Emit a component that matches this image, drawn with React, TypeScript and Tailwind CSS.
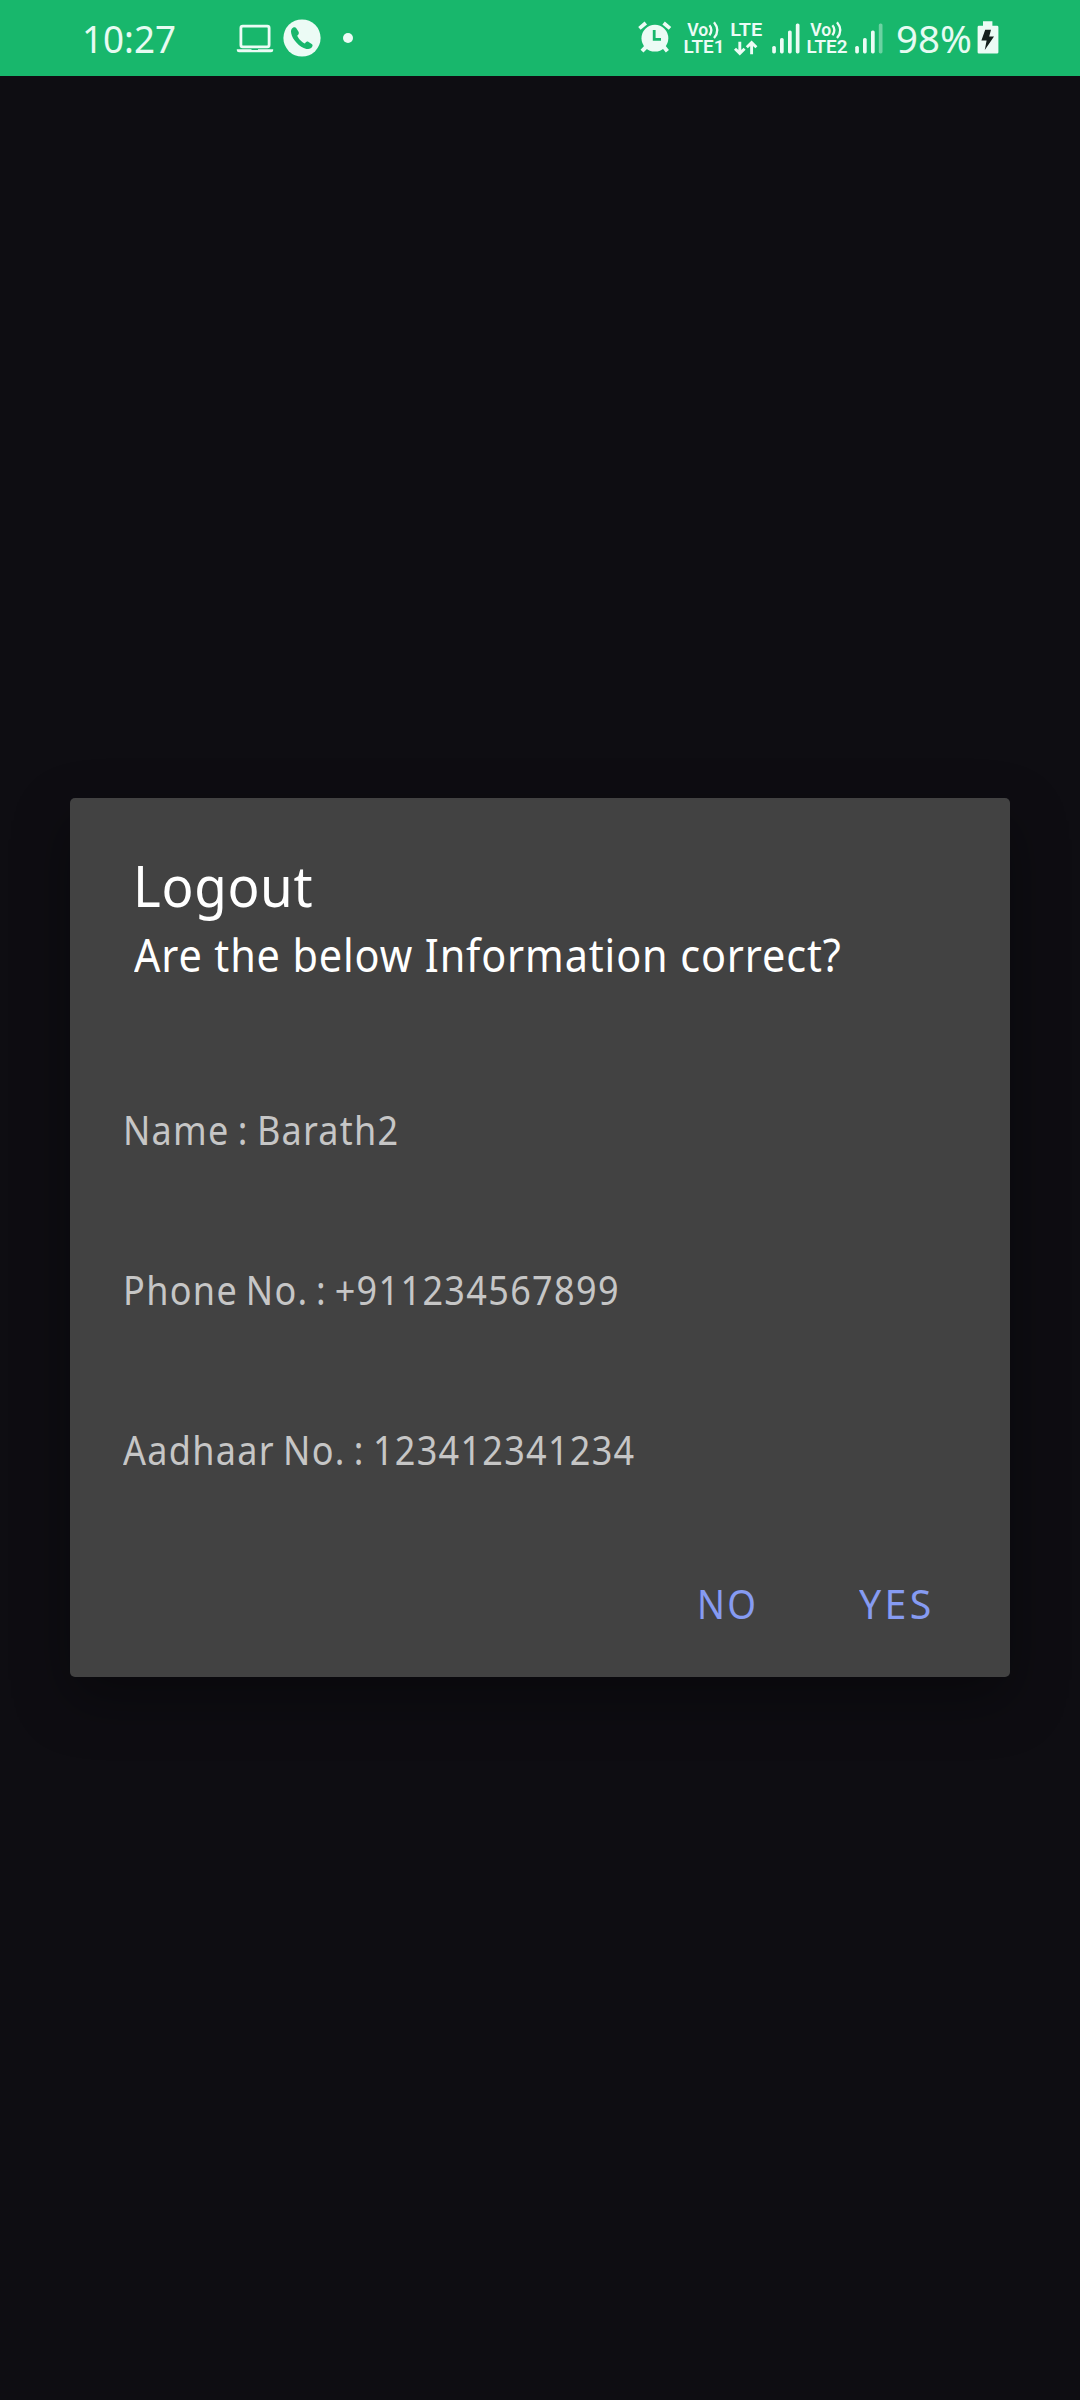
import React from 'react';

const INK = '#ecfbf5';

function LaptopIcon() {
  return (
    <svg className="h-[30px] w-[38px]" viewBox="0 0 38 30" fill="none">
      <rect x="4.9" y="2.2" width="28.2" height="20.6" rx="1.8" stroke={INK} strokeWidth="2.8" />
      <path d="M0.8 25.3H15.5V26H22V25.3H37.2V26.2Q37.2 28.3 35 28.3H3Q0.8 28.3 0.8 26.2Z" fill={INK} />
    </svg>
  );
}

function PhoneIcon() {
  return (
    <svg className="h-[38px] w-[38px]" viewBox="0 0 38 38">
      <circle cx="19" cy="19" r="18.6" fill={INK} />
      <path
        d="M10.2 8.6C8.3 9.8 7.6 11.6 8.2 14.2C9.4 20.6 16.4 28.2 23.4 29.9C26.4 30.5 28.4 29.5 29.4 27.3C29.8 26.3 29.6 25.6 28.7 25L25.6 22.9C24.5 22.2 23.6 22.4 22.8 23.3L21.9 24.4C19 23.4 15.4 19.6 14.2 16.7L15.4 15.4C16 14.6 16 13.7 15.4 12.6L13.3 9.2C12.5 8 11.4 7.9 10.2 8.6Z"
        fill="#18b76c"
      />
    </svg>
  );
}

function AlarmIcon() {
  return (
    <svg className="h-[32px] w-[34px]" viewBox="0 0 34 32" fill="none">
      <path d="M1.4 7.4L7.8 2M25.6 2L32 7.4" stroke={INK} strokeWidth="3.8" />
      <path d="M8 26L4 30.2M26 26L29.4 30.2" stroke={INK} strokeWidth="4" />
      <circle cx="16.9" cy="17.2" r="13.4" fill={INK} />
      <path d="M16.2 9V18.4H23" stroke="#18b76c" strokeWidth="2.8" />
    </svg>
  );
}

function VolteBadge({ sim }: { sim: string }) {
  return (
    <svg className="h-[34px] w-[40px] overflow-visible" viewBox="0 0 40 34" fill="none">
      <g fill={INK} fontFamily="Roboto" fontWeight="600">
        <text x="3.2" y="14.6" fontSize="18" textLength="21" lengthAdjust="spacingAndGlyphs">Vo</text>
        <text x="-0.6" y="32.2" fontSize="18" textLength="41" lengthAdjust="spacingAndGlyphs">{'LTE' + sim}</text>
      </g>
      <path d="M25.4 4.2Q29.4 9 25.4 14.2M30 1.2Q36.6 9.3 30 17" stroke={INK} strokeWidth="2.3" />
    </svg>
  );
}

function LteData() {
  return (
    <svg className="h-[36px] w-[31px] overflow-visible" viewBox="0 0 31 36" fill="none">
      <text x="-0.8" y="15.4" fontSize="19" fontFamily="Roboto" fontWeight="600" fill={INK} textLength="32" lengthAdjust="spacingAndGlyphs">
        LTE
      </text>
      <path d="M8.8 20.8V32M4 27.8L8.8 32.4L13.6 27.8M20.6 33.2V22M15.8 26.2L20.6 21.6L25.4 26.2" stroke={INK} strokeWidth="2.9" />
    </svg>
  );
}

function Signal({ weak = false }: { weak?: boolean }) {
  return (
    <svg className="h-[32px] w-[28px]" viewBox="0 0 28 32" fill={INK}>
      <rect x="0.2" y="24" width="3.7" height="7.4" rx="1.6" />
      <rect x="8" y="16" width="3.7" height="15.4" rx="1.6" />
      <rect x="16" y="8.4" width="3.7" height="23" rx="1.6" />
      <rect x="23.8" y="1.4" width="3.7" height="30" rx="1.6" opacity={weak ? 0.4 : 1} />
    </svg>
  );
}

function Battery() {
  return (
    <svg className="h-[33px] w-[22px]" viewBox="0 0 22 33">
      <path d="M6 0.2H15.4V4.8H20Q21.4 4.8 21.4 6.2V31.2Q21.4 32.6 20 32.6H2Q0.6 32.6 0.6 31.2V6.2Q0.6 4.8 2 4.8H6Z" fill={INK} />
      <path d="M8.2 8.8H14L12.2 15.6H17L7.8 29L9.6 19.6H4.4Z" fill="#14201c" />
    </svg>
  );
}

function StatusBar() {
  return (
    <header className="flex h-[76px] items-start bg-[#18b76c] text-[39px] leading-[60px] text-[#e6fbf2]">
      <span className="mt-[8px] ml-[82px] w-[100px] origin-left scale-x-[0.943] whitespace-nowrap">10:27</span>
      <div className="mt-[24px] ml-[54px]"><LaptopIcon /></div>
      <div className="mt-[19px] ml-[9px]"><PhoneIcon /></div>
      <div className="mt-[33px] ml-[22px] h-[10px] w-[10px] rounded-full bg-[#ecfbf5]" />
      <div className="mt-[21px] ml-[285px]"><AlarmIcon /></div>
      <div className="mt-[21px] ml-[12px]"><VolteBadge sim="1" /></div>
      <div className="mt-[21px] ml-[7px]"><LteData /></div>
      <div className="mt-[22px] ml-[10px]"><Signal /></div>
      <div className="mt-[21px] ml-[7px]"><VolteBadge sim="2" /></div>
      <div className="mt-[22px] ml-[8px]"><Signal weak /></div>
      <span className="mt-[8px] ml-[13px] w-[77px] origin-left scale-x-[0.985] whitespace-nowrap">98%</span>
      <div className="mt-[21px] ml-[4px]"><Battery /></div>
    </header>
  );
}

export default function App() {
  return (
    <div className="flex h-[2400px] w-[1080px] flex-col overflow-hidden bg-[#0e0d12] font-['Noto_Sans',sans-serif]">
      <StatusBar />
      <main className="mx-[70px] mt-[722px] h-[879px] rounded-[5px] bg-[#424242] pt-[57px] leading-[60px] whitespace-nowrap shadow-[0_22px_56px_rgba(0,0,0,0.35)]">
        <h1 className="ml-[63px] origin-left scale-x-[0.93] text-[57px] tracking-[0.7px] text-white">Logout</h1>
        <p className="mt-[9px] ml-[64px] origin-left scale-x-[0.9] text-[46px] tracking-[0.97px] text-white">
          Are the below Information correct?
        </p>
        <div className="mt-[116px] flex flex-col gap-[100px] pl-[53px] text-[40px] text-[#c6c6c6]">
          <p className="origin-left scale-x-[0.9] tracking-[1.36px] [word-spacing:-2.5px]">Name : Barath2</p>
          <p className="origin-left scale-x-[0.9] tracking-[1.5px] [word-spacing:-3.5px]">Phone No. : +911234567899</p>
          <p className="origin-left scale-x-[0.9] tracking-[1.42px] [word-spacing:-2.7px]">Aadhaar No. : 123412341234</p>
        </div>
        <div className="mt-[94px] flex text-[40px] text-[#869bf2]">
          <button className="ml-[627px] w-[70px] origin-left scale-x-[0.92] text-left tracking-[2.6px]">NO</button>
          <button className="ml-[92px] w-[80px] origin-left scale-x-[0.98] text-left tracking-[3.4px]">YES</button>
        </div>
      </main>
    </div>
  );
}
